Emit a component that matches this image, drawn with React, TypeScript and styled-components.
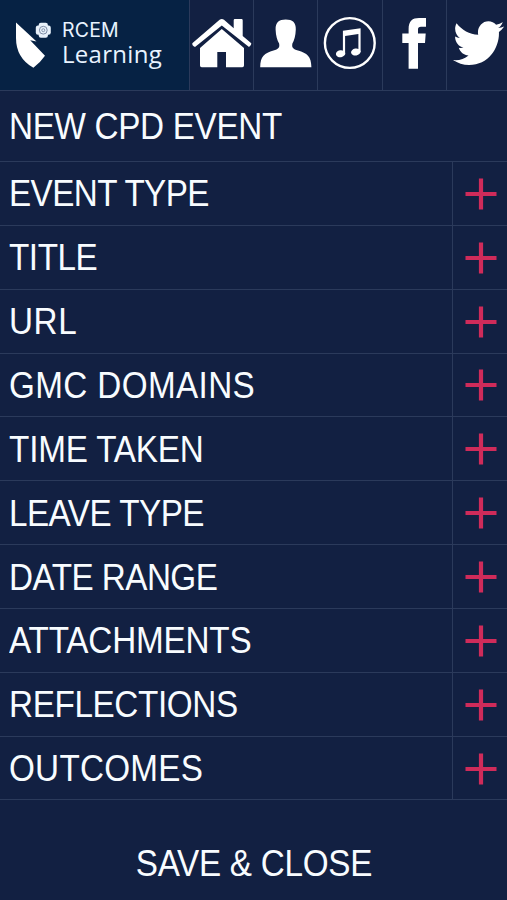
import React from "react";
import styled, { createGlobalStyle } from "styled-components";

const Global = createGlobalStyle`
  * { box-sizing: border-box; }
  body { margin: 0; background: #122042; }
`;

const line = "#2b3a5b";

const Screen = styled.main`
  width: 507px;
  height: 900px;
  display: flex;
  flex-direction: column;
  overflow: hidden;
  background: #122042;
  color: #f8fcff;
  font-family: "Liberation Sans", Arial, sans-serif;
`;

const Header = styled.header`
  display: grid;
  grid-template-columns: 190px 64px 64px 65px 64px 60px;
  height: 91px;
  border-bottom: 1px solid ${line};
`;

const Brand = styled.a`
  display: flex;
  background: #062244;
  border-right: 1px solid ${line};
`;

const BrandMark = styled.svg`
  flex: none;
  width: 62px;
  height: 90px;
`;

const BrandText = styled.div`
  display: flex;
  flex-direction: column;
  padding-top: 18px;
  color: #e8f3ff;
`;

const BrandLine = styled.span<{ $size: number; $height: number; $spacing: number; $face: string }>`
  font-family: ${(p) => p.$face}, sans-serif;
  font-size: ${(p) => p.$size}px;
  line-height: ${(p) => p.$height}px;
  letter-spacing: ${(p) => p.$spacing}px;
  white-space: nowrap;
`;

const NavCell = styled.a`
  border-right: 1px solid ${line};
  overflow: hidden;
  &:last-child { border-right: 0; }
`;

const NavIcon = styled.svg`
  display: block;
  width: 64px;
  height: 90px;
  fill: #fff;
`;

const Heading = styled.h1`
  display: flex;
  align-items: center;
  height: 71px;
  margin: 0;
  padding: 2px 0 0 9px;
  border-bottom: 1px solid ${line};
  font-size: 36px;
  font-weight: 400;
`;

const Rows = styled.div`
  display: grid;
  grid-template-rows: repeat(10, 1fr);
  height: 638.5px;
`;

const Row = styled.div`
  display: grid;
  grid-template-columns: 453px 1fr;
  border-bottom: 1px solid ${line};
`;

const Label = styled.div`
  display: flex;
  align-items: center;
  padding: 2px 0 0 9px;
  border-right: 1px solid ${line};
  font-size: 36px;
`;

const Condensed = styled.span<{ $spacing: number; $origin?: string }>`
  display: inline-block;
  letter-spacing: ${(p) => p.$spacing}px;
  transform: scaleX(0.924);
  transform-origin: ${(p) => p.$origin ?? "left"};
  white-space: nowrap;
`;

const Add = styled.button`
  display: flex;
  align-items: center;
  padding: 1px 0 0 12px;
  border: 0;
  background: none;
`;

const Save = styled.button`
  display: flex;
  flex: 1;
  align-items: center;
  justify-content: center;
  padding: 28px 0 0;
  border: 0;
  background: none;
  color: inherit;
  font: 36px "Liberation Sans", Arial, sans-serif;
`;

const fields: [string, number][] = [
  ["EVENT TYPE", -0.64],
  ["TITLE", -0.5],
  ["URL", 0.6],
  ["GMC DOMAINS", 0.4],
  ["TIME TAKEN", -0.2],
  ["LEAVE TYPE", -0.58],
  ["DATE RANGE", -0.59],
  ["ATTACHMENTS", -0.2],
  ["REFLECTIONS", -0.4],
  ["OUTCOMES", 0.27],
];

export default function App() {
  return (
    <>
      <Global />
      <Screen>
        <Header>
          <Brand>
            <BrandMark viewBox="0 0 62 90" fill="#fff">
              <path d="M16 22.5 36.5 41.4 30.2 40.3 45 55.8Q40 63 33.4 67.8 16 58 16 38Z" />
              <rect x="38.7" y="22.7" width="9.2" height="15" rx="2.2" fill="#e8f1fa" />
              <rect x="35.8" y="25.6" width="15" height="9.2" rx="2.2" fill="#e8f1fa" />
              <circle cx="43.3" cy="30.2" r="3.9" fill="none" stroke="#7c8ba4" strokeWidth="1" />
              <circle cx="43.3" cy="30.2" r="1.5" fill="none" stroke="#7c8ba4" strokeWidth=".9" />
            </BrandMark>
            <BrandText>
              <BrandLine $face='"Inter"' $size={19.5} $height={25} $spacing={0.2}>RCEM</BrandLine>
              <BrandLine $face='"Open Sans"' $size={24} $height={22} $spacing={0.3}>Learning</BrandLine>
            </BrandText>
          </Brand>
          <NavCell>
            <NavIcon viewBox="190 0 64 90">
              <path d="M200 48 221.8 29 244 48V65.5Q244 67.2 242.3 67.2H226V52H217.3V67.2H201.7Q200 67.2 200 65.5Z" />
              <path d="M192.3 43.2 219.6 19.8Q221.8 18.2 224 19.8L233.7 28.2V20.2Q233.7 19 234.9 19H241.5Q242.7 19 242.7 20.2V36L251.3 43.2Q251.6 45.6 249 47L221.8 25.6 195 47Q192 45.6 192.3 43.2Z" />
            </NavIcon>
          </NavCell>
          <NavCell>
            <NavIcon viewBox="254 0 64 90">
              <path d="M285.7 19.6C292.5 19.6 296 22.5 295.8 29.5C295.6 36 294.2 40.5 292.4 43.5C291.5 47.7 293.2 49.2 298 50.6C307 53.3 311.3 56.5 311.4 67.2H260.2C260.3 56.5 264.5 53.3 273.5 50.6C278.3 49.2 280 47.7 279.1 43.5C277.3 40.5 275.8 36 275.6 29.5C275.4 22.5 279 19.6 285.7 19.6Z" />
            </NavIcon>
          </NavCell>
          <NavCell>
            <NavIcon viewBox="318 0 64 90">
              <circle cx="349.8" cy="43" r="24.9" fill="none" stroke="#fff" strokeWidth="2.4" />
              <path d="M342.9 30.8 360.6 28.3V52H358.4V34.1L345.1 35.9V54H342.9Z" />
              <ellipse cx="340.6" cy="53.7" rx="4.7" ry="3.5" transform="rotate(-10 340.6 53.7)" />
              <ellipse cx="355.8" cy="52" rx="4.8" ry="3.5" transform="rotate(-10 355.8 52)" />
            </NavIcon>
          </NavCell>
          <NavCell>
            <NavIcon viewBox="383 0 64 90">
              <path d="M408.6 68.7V43H402.3V33.6H408.6V29C408.6 21 412.5 18 419 18H426V26.8H421C418.8 26.8 418 27.5 418 29.8V33.6H425.7L425 43H418V68.7Z" />
            </NavIcon>
          </NavCell>
          <NavCell>
            <NavIcon viewBox="447 0 64 90">
              <path
                transform="translate(453 16.1) scale(.1 .1055)"
                d="M459.37 151.716c.325 4.548.325 9.097.325 13.645 0 138.72-105.583 298.558-298.558 298.558-59.452 0-114.68-17.219-161.137-47.106 8.447.974 16.568 1.299 25.34 1.299 49.055 0 94.213-16.568 130.274-44.832-46.132-.975-84.792-31.188-98.112-72.772 6.498.974 12.995 1.624 19.818 1.624 9.421 0 18.843-1.3 27.614-3.573-48.081-9.747-84.143-51.98-84.143-102.985v-1.299c13.969 7.797 30.214 12.67 47.431 13.319-28.264-18.843-46.781-51.005-46.781-87.391 0-19.492 5.197-37.36 14.294-52.954 51.655 63.675 129.3 105.258 216.365 109.807-1.624-7.797-2.599-15.918-2.599-24.04 0-57.828 46.782-104.934 104.934-104.934 30.213 0 57.502 12.67 76.67 33.137 23.715-4.548 46.456-13.32 66.599-25.34-7.798 24.366-24.366 44.833-46.132 57.827 21.117-2.273 41.584-8.122 60.426-16.243-14.292 20.791-32.161 39.308-52.628 54.253z"
              />
            </NavIcon>
          </NavCell>
        </Header>
        <Heading>
          <Condensed $spacing={-0.35}>NEW CPD EVENT</Condensed>
        </Heading>
        <Rows>
          {fields.map(([name, spacing]) => (
            <Row key={name}>
              <Label>
                <Condensed $spacing={spacing}>{name}</Condensed>
              </Label>
              <Add aria-label={`Add ${name.toLowerCase()}`}>
                <svg width="32" height="32" viewBox="0 0 32 32" stroke="#cf2b5a" strokeWidth="4.2">
                  <path d="M.5 16H31.5M16 .5V31.5" />
                </svg>
              </Add>
            </Row>
          ))}
        </Rows>
        <Save>
          <Condensed $spacing={-0.3} $origin="center">SAVE &amp; CLOSE</Condensed>
        </Save>
      </Screen>
    </>
  );
}
